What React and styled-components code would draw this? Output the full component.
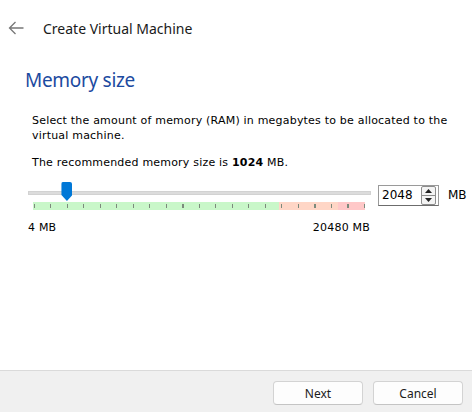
import React from 'react';
import styled, { createGlobalStyle } from 'styled-components';

const Global = createGlobalStyle`
html, body {
  margin: 0;
  padding: 0;
  background: #ffffff;
}
`;

const Window = styled.div`
width: 472px;
height: 412px;
display: flex;
flex-direction: column;
background: #ffffff;
font-family: "Segoe UI", "Noto Sans", sans-serif;
color: #1b1b1b;
overflow: hidden;
`;

const Header = styled.div`
height: 56px;
display: flex;
align-items: center;
padding-left: 8px;
`;

const BackButton = styled.div`
width: 16px;
height: 16px;
display: flex;
align-items: center;
justify-content: center;
margin-right: 19px;
`;

const Title = styled.div`
font-size: 14px;
color: #1a1a1a;
`;

const Heading = styled.h1`
margin: 10px 0 0 25px;
font-size: 19px;
letter-spacing: -0.3px;
line-height: 28px;
font-weight: normal;
color: #1c4aa0;
`;

const Body = styled.div`
padding: 19px 0 0 28px;
font-family: Tahoma, "DejaVu Sans", sans-serif;
font-size: 11px;
letter-spacing: 0.2px;
line-height: 15px;
color: #000;
`;

const Text = styled.p`
margin: 0 0 12px 4px;
`;

const SliderRow = styled.div`
display: flex;
align-items: flex-start;
margin-top: 12px;
`;

const SliderColumn = styled.div`
width: 343px;
flex-shrink: 0;
display: flex;
flex-direction: column;
`;

const SliderArea = styled.div`
position: relative;
height: 20px;
`;

const Track = styled.div`
margin-top: 9px;
height: 2px;
background: #dcdcdc;
border: 1px solid #d2d2d2;
`;

const Handle = styled.div`
position: absolute;
top: 0;
width: 11px;
height: 19px;
background: #0078d7;
border-radius: 2px 2px 0 0;
clip-path: polygon(0 0, 100% 0, 100% 68%, 50% 100%, 0 68%);
`;

const Scale = styled.div`
margin-left: 5px;
width: 332px;
height: 8px;
background-image:
  repeating-linear-gradient(to right, #7c8a7c 0 1px, transparent 1px 16.5px),
  linear-gradient(to right, #c9f7c9 0 246px, #ffd6c6 246px 305px, #ffc8c8 305px);
background-size: 100% 4px, 100% 100%;
background-position: 1px 2px, 0 0;
background-repeat: no-repeat;
`;

const Labels = styled.div`
display: flex;
justify-content: space-between;
margin-top: 10px;
padding-right: 1px;
`;

const SpinBox = styled.div`
margin: 3px 0 0 7px;
width: 56px;
height: 19px;
flex-shrink: 0;
border: 1px solid #9a9a9a;
border-bottom-color: #6c6c6c;
display: flex;
align-items: center;
justify-content: space-between;
padding-left: 3px;
font-size: 12px;
letter-spacing: 0;
`;

const SpinButtons = styled.div`
width: 13px;
height: 17px;
margin-right: 2px;
border: 1px solid #8d8d8d;
border-radius: 2px;
background: #f4f4f4;
display: flex;
flex-direction: column;
`;

const SpinHalf = styled.div`
flex: 1;
display: flex;
align-items: center;
justify-content: center;
border-top: ${p => (p.bottom ? '1px solid #8d8d8d' : 'none')};
`;

const Unit = styled.div`
margin: 6px 0 0 9px;
font-size: 12px;
letter-spacing: 0;
`;

const Footer = styled.div`
margin-top: auto;
height: 42px;
border-top: 1px solid #dadada;
background: #f0f0f0;
display: flex;
justify-content: flex-end;
align-items: flex-start;
gap: 10px;
padding: 10px 9px 0 0;
box-sizing: border-box;
`;

const Button = styled.button`
width: 90px;
height: 24px;
border: 1px solid #d3d3d3;
border-bottom-color: #c4c4c4;
border-radius: 4px;
background: #fdfdfd;
font-family: "Segoe UI", "Noto Sans", sans-serif;
font-size: 12px;
color: #1b1b1b;
padding: 0;
`;

const min = 4;
const max = 20480;
const value = 2048;

const Arrow = ({ up }) => (
  <svg width="7" height="4" viewBox="0 0 7 4">
    <path d={up ? 'M0 4 L3.5 0 L7 4 Z' : 'M0 0 L3.5 4 L7 0 Z'} fill="#222" />
  </svg>
);

export default function App() {
  const handleLeft = 34 + ((value - min) / (max - min)) * 330 - 28 - 5.5;
  return (
    <Window>
      <Global />
      <Header>
        <BackButton>
          <svg width="16" height="14" viewBox="0 0 16 14">
            <path d="M15.5 7 H1.5 M7.5 1 L1.5 7 L7.5 13" fill="none" stroke="#777" strokeWidth="1.3" />
          </svg>
        </BackButton>
        <Title>Create Virtual Machine</Title>
      </Header>
      <Heading>Memory size</Heading>
      <Body>
        <Text>Select the amount of memory (RAM) in megabytes to be allocated to the virtual machine.</Text>
        <Text>The recommended memory size is <b>1024</b> MB.</Text>
        <SliderRow>
          <SliderColumn>
            <SliderArea>
              <Track />
              <Handle style={{ left: handleLeft }} />
            </SliderArea>
            <Scale />
            <Labels>
              <span>4 MB</span>
              <span>20480 MB</span>
            </Labels>
          </SliderColumn>
          <SpinBox>
            <span>2048</span>
            <SpinButtons>
              <SpinHalf><Arrow up /></SpinHalf>
              <SpinHalf bottom><Arrow /></SpinHalf>
            </SpinButtons>
          </SpinBox>
          <Unit>MB</Unit>
        </SliderRow>
      </Body>
      <Footer>
        <Button>Next</Button>
        <Button>Cancel</Button>
      </Footer>
    </Window>
  );
}
